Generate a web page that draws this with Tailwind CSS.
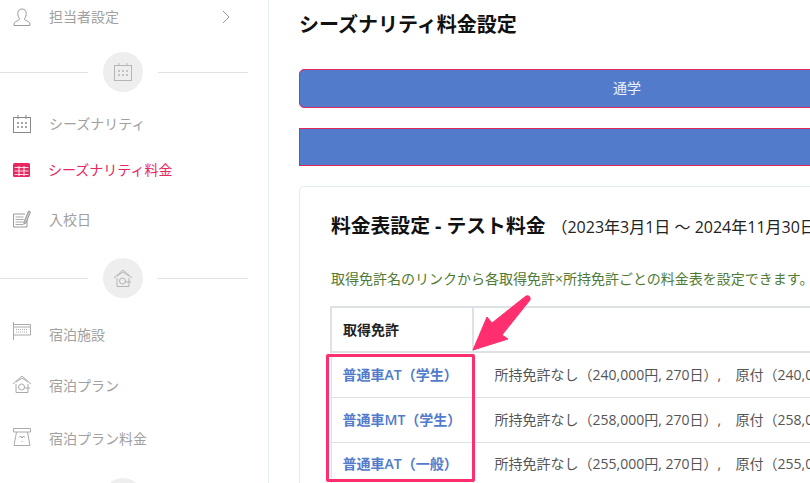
<!DOCTYPE html>
<html lang="ja">
<head>
<meta charset="utf-8">
<script src="https://cdn.jsdelivr.net/npm/@tailwindcss/browser@4"></script>
</head>
<body class="bg-white">
<div class="relative flex w-[810px] h-[483px] overflow-hidden bg-white font-['Open_Sans','Noto_Sans_CJK_JP',sans-serif]">
  <aside class="w-[269px] h-[483px] shrink-0 border-r border-[#e3eded] overflow-hidden text-[14px] text-[#a0a0a0]">
    <div class="h-[34px] flex items-center pl-[13px]">
      <svg class="w-[18px] h-[18px] mr-[18px]" viewBox="0 0 18 18" fill="none" stroke="#999" stroke-width="1"><path d="M1 17.500v-1.500c0-2 3-3 5-4 .6-.5.6-1.500.2-2C5.200 9 4.800 7.500 4.800 5.500 4.800 2.500 6.500 1 9 1s4.200 1.500 4.200 4.500c0 2-.4 3.500-1.400 4.500-.4.500-.4 1.500.2 2 2 1 5 2 5 4v1.500z"/></svg>
      <span class="w-[173px] mb-[2px]">担当者設定</span>
      <svg class="w-[8px] h-[14px]" viewBox="0 0 8 14" fill="none" stroke="#999" stroke-width="1"><path d="M1 1l6 6-6 6"/></svg>
    </div>
    <div class="mt-[18px] flex items-center h-10 w-[248px]">
      <div class="h-px w-[88px] bg-[#dfe3e3]"></div>
      <div class="ml-[15px] mr-[15px] w-10 h-10 rounded-full bg-[#eeeeee] flex items-center justify-center">
        <svg class="w-[18px] h-[18px]" viewBox="0 0 18 18" fill="none" stroke="#b5b5b5" stroke-width="1"><rect x="0.500" y="2.500" width="17" height="15"/><path d="M5 0v3M13 0v3"/><path d="M4 8h2M8 8h2M12 8h2M4 12h2M8 12h2M12 12h2" stroke-width="1.500"/></svg>
      </div>
      <div class="h-px w-[90px] bg-[#dfe3e3]"></div>
    </div>
    <div class="mt-[9px] h-[46px] flex items-center pl-[13px]">
      <svg class="w-[18px] h-[18px] mr-[18px]" viewBox="0 0 18 18" fill="none" stroke="#888" stroke-width="1"><rect x="0.500" y="2.500" width="17" height="15"/><path d="M5 0v4M13 0v4"/><path d="M4 8h2M8 8h2M12 8h2M4 12h2M8 12h2M12 12h2" stroke-width="1.500"/></svg>
      <span class="mb-[2px]">シーズナリティ</span>
    </div>
    <div class="h-[46px] flex items-center pl-[13px] text-[#e8265f]">
      <svg class="w-[18px] h-[18px] mr-[17px]" viewBox="0 0 18 18"><rect y="2" width="17" height="14" rx="1.500" fill="#e8265f"/><path d="M1.500 6.500h14M1.500 10h14M1.500 13.500h14M6 5v10M11 5v10" stroke="#ffd6e2" stroke-width="1.200"/></svg>
      <span class="mb-[2px]">シーズナリティ料金</span>
    </div>
    <div class="mt-1 h-[46px] flex items-center pl-[13px]">
      <svg class="w-[18px] h-[18px] mr-[18px] -mt-[2px]" viewBox="0 0 18 18" fill="none" stroke="#999" stroke-width="1"><path d="M14 7v10H0.500V4H12"/><path d="M2.500 7h8M2.500 9.500h8M2.500 12h8M2.500 14.500h8" stroke="#aaa"/><path d="M11 12l4.500-11 2 1-4.500 11-2 1z" fill="#ccc"/></svg>
      <span class="mb-[2px]">入校日</span>
    </div>
    <div class="mt-[15px] flex items-center h-10 w-[248px]">
      <div class="h-px w-[88px] bg-[#dfe3e3]"></div>
      <div class="ml-[15px] mr-[15px] w-10 h-10 rounded-full bg-[#eeeeee] flex items-center justify-center">
        <svg class="w-[18px] h-[17px]" viewBox="0 0 18 17" fill="none" stroke="#b5b5b5" stroke-width="1"><path d="M0 8l9-8 9 8M3 6l6-4 6 4M3 8v8.500h12V8"/><circle cx="8.500" cy="11" r="3"/><path d="M11 12h6"/></svg>
      </div>
      <div class="h-px w-[90px] bg-[#dfe3e3]"></div>
    </div>
    <div class="mt-[13px] h-[46px] flex items-center pl-[13px]">
      <svg class="w-[18px] h-[18px] mr-[18px] -mt-[6px]" viewBox="0 0 18 18" fill="none" stroke="#aaa" stroke-width="1"><path d="M0.500 0v18M1 2.500h16.500v10.500H1M1 5h16.500"/><path d="M3 7.500h12M3 10h12" stroke-dasharray="1 1"/></svg>
      <span>宿泊施設</span>
    </div>
    <div class="mt-[6px] h-[46px] flex items-center pl-[13px]">
      <svg class="w-[18px] h-[17px] mr-[18px] -mt-[3px]" viewBox="0 0 18 17" fill="none" stroke="#aaa" stroke-width="1"><path d="M0 8l9-8 9 8M3 6l6-4 6 4M3 8v8.500h12V8"/><circle cx="8.500" cy="11" r="3"/><path d="M11 12h6"/></svg>
      <span class="mb-[2px]">宿泊プラン</span>
    </div>
    <div class="mt-[7px] h-[46px] flex items-center pl-[13px]">
      <svg class="w-[18px] h-[18px] mr-[18px] -mt-[4px]" viewBox="0 0 18 18" fill="none" stroke="#aaa" stroke-width="1"><path d="M0.500 0.500h17v3.500H0.500zM3.500 4L1 17.500h16L14.500 4"/><path d="M6 9.500l1.500-1.500 1.500 2 1.500-2 1.500 1.500M9 13v1" stroke="#999"/></svg>
      <span class="mb-[2px]">宿泊プラン料金</span>
    </div>
    <div class="mt-4 ml-[103px] w-10 h-10 rounded-full bg-[#eeeeee]"></div>
  </aside>

  <main class="w-[700px] shrink-0 pl-[30px]">
    <h1 class="mt-[11px] h-[28px] text-[20px] leading-[28px] font-semibold text-[#111] whitespace-nowrap">シーズナリティ料金設定</h1>
    <div class="mt-[30px] w-[650px] h-[39px] rounded-[5px] border border-[#e0265f] bg-[#527bcb] flex items-center justify-center text-[14px] text-white/90 pl-[6px] pb-[2px]">通学</div>
    <div class="mt-[20px] w-[650px] h-[38px] border border-[#e0265f] bg-[#527bcb]"></div>
    <section class="mt-[20px] w-[650px] h-[320px] rounded-[4px] border border-[#e3eded] pl-[31px]">
      <div class="mt-[24px] flex items-baseline whitespace-nowrap text-[#111]">
        <h2 class="text-[19.8px] leading-[30px] font-bold">料金表設定 - テスト料金</h2>
        <span class="ml-[6px] text-[16px] text-[#222]">（2023年3月1日 〜 2024年11月30日）</span>
      </div>
      <p class="mt-[27px] text-[14px] leading-[22px] text-[#4f7a34] whitespace-nowrap">取得免許名のリンクから各取得免許×所持免許ごとの料金表を設定できます。</p>
      <table class="mt-[16px] -ml-px w-[640px] border-collapse text-[14px] whitespace-nowrap">
        <thead>
          <tr class="h-[45px]">
            <th class="w-[142px] border-2 border-[#dee2e6] pl-[11px] text-left font-semibold text-[#222]">取得免許</th>
            <th class="border-2 border-[#dee2e6]"></th>
          </tr>
        </thead>
        <tbody>
          <tr class="h-[45px]">
            <td class="border border-[#dee2e6] pl-[11px] pb-[1px] font-semibold text-[#527bcb]">普通車AT（学生）</td>
            <td class="border border-[#dee2e6] pl-[21px] pb-[1px] text-[#555]">所持免許なし（240,000円, 270日）,&nbsp;&nbsp;&nbsp; 原付（240,000円, 270日）</td>
          </tr>
          <tr class="h-[45px]">
            <td class="border border-[#dee2e6] pl-[11px] pb-[1px] font-semibold text-[#527bcb]">普通車MT（学生）</td>
            <td class="border border-[#dee2e6] pl-[21px] pb-[1px] text-[#555]">所持免許なし（258,000円, 270日）,&nbsp;&nbsp;&nbsp; 原付（258,000円, 270日）</td>
          </tr>
          <tr class="h-[45px]">
            <td class="border border-[#dee2e6] pl-[11px] pb-[3px] font-semibold text-[#527bcb]">普通車AT（一般）</td>
            <td class="border border-[#dee2e6] pl-[21px] pb-[3px] text-[#555]">所持免許なし（255,000円, 270日）,&nbsp;&nbsp;&nbsp; 原付（255,000円, 270日）</td>
          </tr>
        </tbody>
      </table>
    </section>
  </main>

  <div class="absolute left-[326px] top-[354px] w-[149px] h-[128px] rounded-[2px] border-[3px] border-[#ff2e6e]"></div>
  <svg class="absolute left-[465px] top-[290px]" width="70" height="65" viewBox="0 0 70 65"><path d="M8 60 L22 27 L27 33 L61 6 Q66 5 65 10 L37 45 L43 49 Z" fill="#ff2e6e" stroke="#ff2e6e" stroke-width="1" stroke-linejoin="round"/></svg>
</div>
</body>
</html>
